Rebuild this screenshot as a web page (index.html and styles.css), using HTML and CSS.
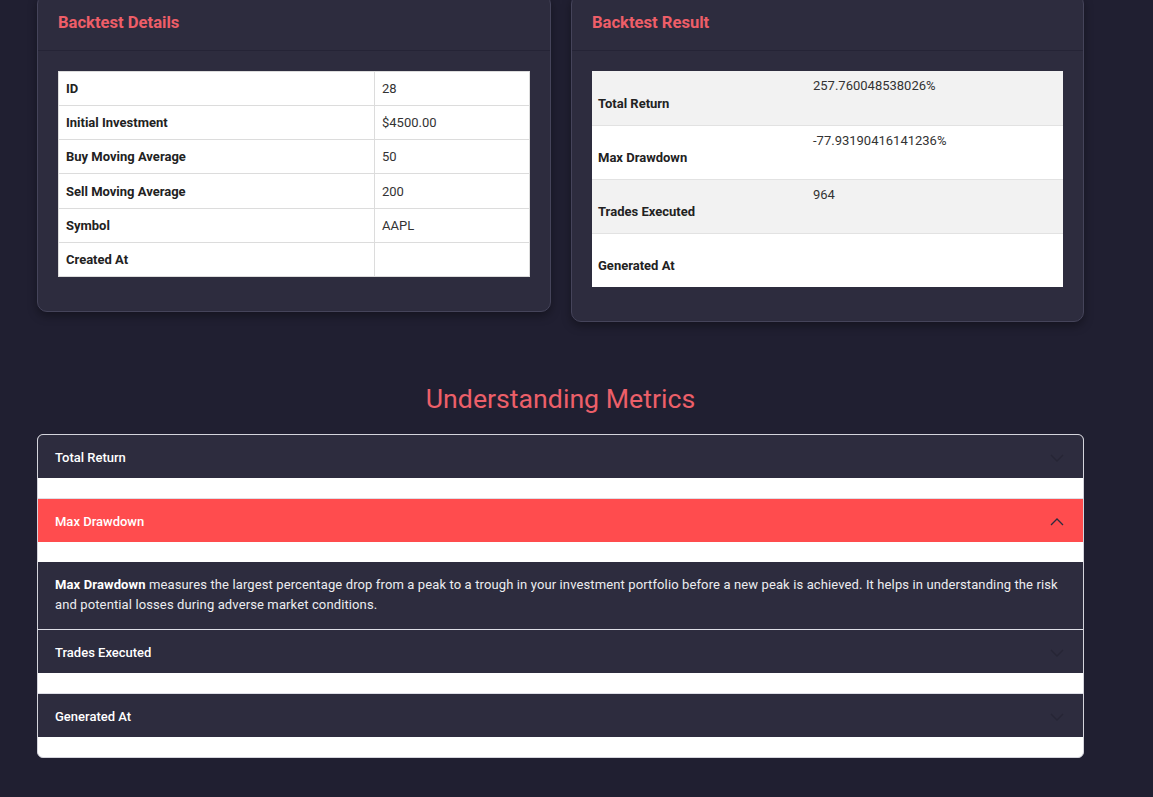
FILE: index.html
```html
<!DOCTYPE html>
<html>
<head>
<meta charset="utf-8">
<link rel="stylesheet" href="styles.css">
</head>
<body>
<main class="page">
  <section class="cards">
    <div class="card">
      <div class="card-header"><h3 class="card-title">Backtest Details</h3></div>
      <div class="card-body">
        <table class="details">
          <tr><th>ID</th><td>28</td></tr>
          <tr><th>Initial Investment</th><td>$4500.00</td></tr>
          <tr><th>Buy Moving Average</th><td>50</td></tr>
          <tr><th>Sell Moving Average</th><td>200</td></tr>
          <tr><th>Symbol</th><td>AAPL</td></tr>
          <tr><th>Created At</th><td></td></tr>
        </table>
      </div>
    </div>
    <div class="card">
      <div class="card-header"><h3 class="card-title">Backtest Result</h3></div>
      <div class="card-body">
        <table class="result">
          <tr class="striped"><th>Total Return</th><td>257.760048538026%</td></tr>
          <tr><th>Max Drawdown</th><td>-77.93190416141236%</td></tr>
          <tr class="striped"><th>Trades Executed</th><td>964</td></tr>
          <tr><th>Generated At</th><td></td></tr>
        </table>
      </div>
    </div>
  </section>

  <h2 class="metrics-title">Understanding Metrics</h2>

  <div class="accordion">
    <div class="acc-item">
      <h2 class="acc-header"><button class="acc-button"><span>Total Return</span>
        <svg class="chev" width="14" height="8" viewBox="0 0 14 8"><polyline points="1,1 7,7 13,1" fill="none" stroke="currentColor" stroke-width="1.3"/></svg></button></h2>
    </div>
    <div class="acc-item">
      <h2 class="acc-header"><button class="acc-button active"><span>Max Drawdown</span>
        <svg class="chev" width="14" height="8" viewBox="0 0 14 8"><polyline points="1,7 7,1 13,7" fill="none" stroke="currentColor" stroke-width="1.3"/></svg></button></h2>
      <div class="acc-body"><strong>Max Drawdown</strong> measures the largest percentage drop from a peak to a trough in your investment portfolio before a new peak is achieved. It helps in understanding the risk and potential losses during adverse market conditions.</div>
    </div>
    <div class="acc-item">
      <h2 class="acc-header"><button class="acc-button"><span>Trades Executed</span>
        <svg class="chev" width="14" height="8" viewBox="0 0 14 8"><polyline points="1,1 7,7 13,1" fill="none" stroke="currentColor" stroke-width="1.3"/></svg></button></h2>
    </div>
    <div class="acc-item">
      <h2 class="acc-header"><button class="acc-button"><span>Generated At</span>
        <svg class="chev" width="14" height="8" viewBox="0 0 14 8"><polyline points="1,1 7,7 13,1" fill="none" stroke="currentColor" stroke-width="1.3"/></svg></button></h2>
    </div>
  </div>
</main>
</body>
</html>
```
FILE: styles.css
```css
* { box-sizing: border-box; }
html, body { margin: 0; padding: 0; }
body {
  background: #201f31;
  font-family: Roboto, "Liberation Sans", sans-serif;
  color: #212529;
  overflow: hidden;
}
.page {
  width: 1047px;
  margin: -6px 0 0 37px;
}
.cards {
  display: grid;
  grid-template-columns: 514px 513px;
  gap: 20px;
  align-items: start;
}
.card {
  background: #2d2c3e;
  border: 1px solid #45445a;
  border-radius: 10px;
  box-shadow: 0 4px 10px rgba(0,0,0,0.35);
}
.card-header {
  padding: 18px 20px 17px;
  border-bottom: 1px solid #252436;
}
.card-title {
  margin: 0;
  font-size: 16.6px;
  line-height: 20px;
  font-weight: 700;
  color: #ee5e68;
}
.card-body {
  padding: 20px 20px 34px;
}
table {
  width: 100%;
  border-collapse: collapse;
  background: #fff;
  font-size: 13px;
}
.details th, .details td {
  border: 1px solid #dcdcdc;
  height: 34px;
  padding: 0 7px;
  text-align: left;
  vertical-align: middle;
}
.details tr:nth-child(4) th, .details tr:nth-child(4) td { height: 35px; }
.details th { width: 316px; font-weight: 700; color: #222; }
.details td { font-weight: 400; color: #333; }
.result tr { border-bottom: 1px solid #e2e2e2; }
.result tr:last-child { border-bottom: none; }
.result tr.striped { background: #f2f2f2; }
.result th, .result td { height: 54px; text-align: left; }
.result th {
  width: 213px;
  font-weight: 700;
  color: #222;
  vertical-align: bottom;
  padding: 0 6px 14px;
}
.result td {
  vertical-align: top;
  padding: 7px 8px 0;
  color: #333;
}
.metrics-title {
  margin: 60px 0 18px;
  text-align: center;
  font-size: 26.7px;
  line-height: 34px;
  font-weight: 400;
  color: #ec5f69;
}
.accordion {
  background: #fff;
  border: 1px solid #d4d4dc;
  border-radius: 6px;
  overflow: hidden;
}
.acc-item + .acc-item { border-top: 1px solid #dedee6; }
.acc-header { margin: 0 0 20px; }
.acc-button {
  width: 100%;
  height: 43px;
  display: flex;
  align-items: center;
  justify-content: space-between;
  padding: 2px 19px 0 17px;
  border: none;
  background: #2d2c3e;
  color: #fff;
  font-family: Roboto, "Liberation Sans", sans-serif;
  font-size: 13px;
  font-weight: 500;
  text-align: left;
}
.acc-button .chev { color: #262535; }
.acc-button.active { background: #ff4c4e; }
.acc-button.active .chev { color: #2d2c3e; }
.acc-body {
  background: #2d2c3e;
  color: #ececf0;
  font-size: 13px;
  line-height: 20px;
  letter-spacing: 0.12px;
  padding: 13px 20px 14px 17px;
}
.acc-body strong { color: #fff; }
```
